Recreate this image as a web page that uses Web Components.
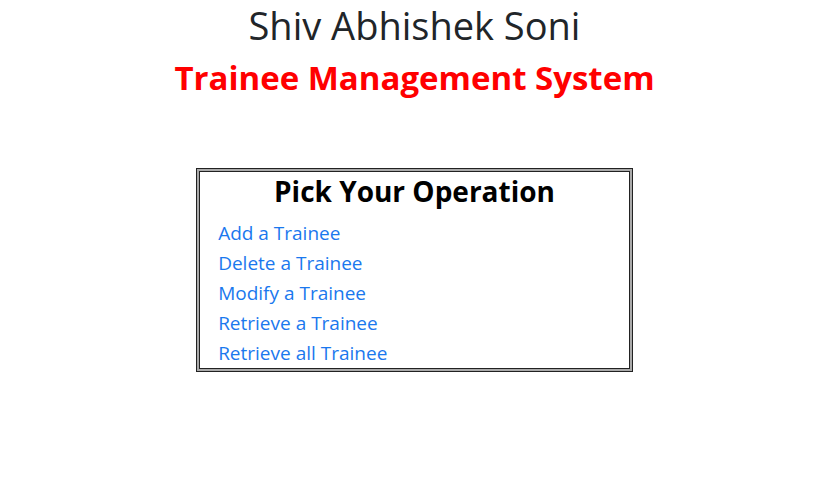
<!DOCTYPE html>
<html lang="en">
<head>
<meta charset="utf-8">
<title>Trainee Management System</title>
<style>
body { margin: 0; background: #fff; color: #212529; font-family: "Segoe UI", "Open Sans", "Noto Sans", sans-serif; }
</style>
</head>
<body>
<trainee-app>
  <page-heading>
    Shiv Abhishek Soni
    <span slot="system">Trainee Management System</span>
  </page-heading>
  <operation-menu>
    <span slot="title">Pick Your Operation</span>
    <operation-link href="#add">Add a Trainee</operation-link>
    <operation-link href="#delete">Delete a Trainee</operation-link>
    <operation-link href="#modify">Modify a Trainee</operation-link>
    <operation-link href="#retrieve">Retrieve a Trainee</operation-link>
    <operation-link href="#all">Retrieve all Trainee</operation-link>
  </operation-menu>
</trainee-app>
<script>
const define = (name, html, setup) => customElements.define(name, class extends HTMLElement {
  constructor() {
    super();
    this.attachShadow({ mode: "open" }).innerHTML = html;
  }
  connectedCallback() { if (setup) setup(this); }
});

define("trainee-app", `<style>
  :host { display: block; }
  main { display: flex; flex-direction: column; align-items: center; gap: 70px; padding: 0 12px 0 17px; }
</style><main><slot></slot></main>`);

define("page-heading", `<style>
  :host { display: block; text-align: center; }
  h1, h2 { margin: 0; }
  h1 { margin-bottom: 8px; font-size: 38px; line-height: 50px; font-weight: 400; }
  h2 { font-size: 33px; line-height: 40px; font-weight: 700; color: #f00; }
</style><h1><slot></slot></h1><h2><slot name="system"></slot></h2>`);

define("operation-menu", `<style>
  :host { display: block; box-sizing: border-box; width: 53vw; min-width: 320px; border: 1px solid #222; padding: 2px; background: #aaa; }
  section { border: 1px solid #222; background: #fff; }
  h2 { margin: 0 0 8px; font-size: 28px; line-height: 38px; font-weight: 700; color: #000; text-align: center; }
  nav { display: flex; flex-direction: column; align-items: flex-start; padding: 0 18px; }
</style><section><h2><slot name="title"></slot></h2><nav><slot></slot></nav></section>`);

define("operation-link", `<style>
  :host { display: block; }
  a { display: block; font-size: 19px; line-height: 30px; color: #1a78ee; text-decoration: none; }
  a:hover { text-decoration: underline; }
</style><a><slot></slot></a>`, el => {
  el.shadowRoot.querySelector("a").href = el.getAttribute("href");
});
</script>
</body>
</html>
